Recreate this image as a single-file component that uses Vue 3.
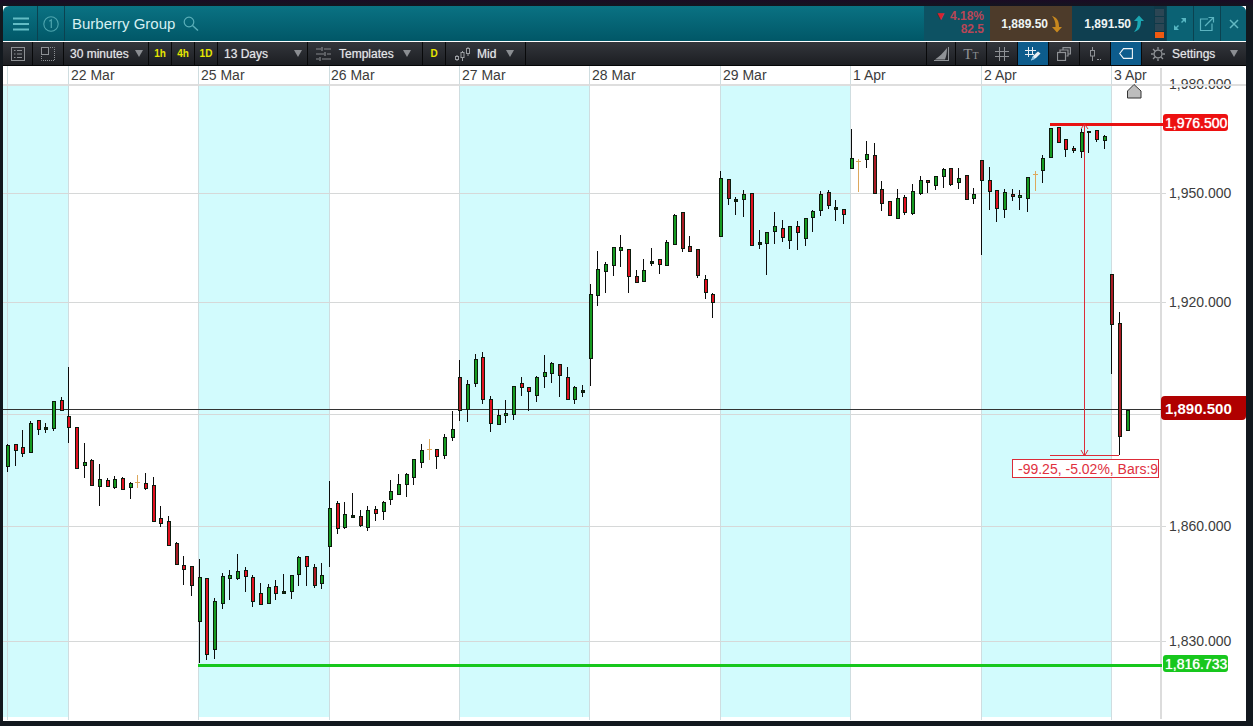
<script setup>
const raw = `g 445 466 444 472;r 444 450 444 466;r 447 453 430 457;g 423 452 421 452;r 420 429 420 435;k 427 429 423 433;g 401 428 401 431;r 400 410 397 410;r 416 427 367 443;r 427 468 427 468;g 462 465 443 478;d 460 485 459 485;g 479 486 464 506;r 480 486 478 487;g 479 487 476 489;r 478 489 477 489;g 483 487 482 499;t 482 483 475 488;r 483 488 473 490;r 485 521 477 521;r 518 523 506 527;r 521 545 516 546;d 543 564 542 564;r 565 569 556 585;d 566 585 566 596;g 577 621 559 663;r 578 654 578 660;g 601 649 598 659;g 576 603 573 609;g 575 578 570 600;g 571 578 554 580;r 570 576 567 592;r 577 601 575 607;r 593 604 583 604;g 587 603 584 603;r 586 593 580 600;k 591 593 574 594;g 575 591 575 599;g 557 574 556 586;r 556 566 556 586;d 567 585 564 588;g 575 583 563 589;g 508 546 481 567;r 503 528 501 534;g 514 527 502 529;k 515 517 493 518;d 516 525 510 527;g 510 527 506 531;r 509 513 506 521;g 502 511 501 520;g 491 499 480 505;g 484 494 474 494;g 474 484 473 497;g 459 477 459 485;g 450 462 444 468;t 449 450 439 460;r 449 456 449 469;g 437 455 434 459;g 429 437 411 441;d 377 410 360 421;g 384 409 380 422;g 359 383 354 387;r 357 399 352 404;r 399 423 396 432;g 415 424 409 424;g 413 415 400 423;g 386 414 386 420;r 383 387 377 396;r 387 391 387 411;g 377 395 376 402;g 372 376 355 388;g 363 373 362 383;d 364 375 364 397;r 377 399 367 399;g 387 399 386 404;k 390 392 385 397;g 294 358 284 386;g 269 295 251 306;g 264 271 262 293;g 247 265 247 276;g 247 250 235 267;r 249 276 249 293;d 276 282 270 283;g 270 281 259 281;k 261 263 248 266;r 259 264 259 274;g 242 265 240 265;g 215 244 214 244;d 212 248 212 252;d 246 251 236 252;d 249 275 249 278;r 279 292 275 299;r 294 302 293 318;g 178 236 171 236;d 179 198 179 205;k 199 201 197 215;g 194 199 190 217;r 193 245 193 245;k 242 244 230 249;g 232 243 232 275;g 226 231 212 244;r 228 237 220 242;g 226 240 226 249;r 226 232 221 250;g 218 238 218 246;g 211 217 210 232;g 194 210 191 216;d 192 205 190 209;k 207 209 200 221;r 209 214 209 224;g 158 168 129 169;t 161 162 159 192;g 154 159 141 168;d 155 193 143 193;d 189 203 181 211;r 201 215 201 216;g 198 218 189 219;r 197 212 195 215;g 191 213 184 215;g 180 193 176 195;d 180 182 180 193;g 176 185 176 190;g 169 176 168 188;d 168 184 168 186;g 178 182 168 189;d 175 199 175 200;g 194 198 188 204;d 160 180 160 255;r 180 191 167 210;r 190 208 190 222;g 192 209 189 218;d 194 196 189 201;g 195 197 190 210;g 177 198 177 212;t 174 175 171 191;g 158 170 155 183;g 128 157 128 157;r 127 142 127 142;r 139 149 139 157;d 148 150 146 153;g 132 151 129 158;k 131 132 131 153;r 130 139 130 142;g 136 140 135 149;d 274 324 274 374;d 323 436 312 455;g 410 430 410 431`
const fills = { g: '#159a20', r: '#e01020', d: '#a81a24', k: '#0c3010' }
const candles = raw.split(';').map((row, i) => {
  const [c, top, bot, wt, wb] = row.split(' ')
  return {
    x: Math.floor(68.7 + 7.67 * (i - 8)) + 0.5,
    type: c,
    top: +top,
    bot: +bot,
    wt: +wt,
    wb: +wb
  }
})
const bands = [[3, 65], [198, 131], [459, 130], [720, 130], [981, 130]]
const days = [7, 68, 198, 329, 459, 589, 720, 850, 981, 1111]
const dates = [['22 Mar', 71], ['25 Mar', 201], ['26 Mar', 331], ['27 Mar', 462], ['28 Mar', 592], ['29 Mar', 723], ['1 Apr', 853], ['2 Apr', 984], ['3 Apr', 1114]]
const prices = [['1,950.000', 193], ['1,920.000', 302], ['1,860.000', 526], ['1,830.000', 641]]
const grid = [193, 302, 414, 526, 641]
</script>

<template>
  <div class="frame">
    <div class="window">
      <header class="top">
        <div class="cell burger">
          <svg width="16" height="14" viewBox="0 0 16 14"><path d="M0 1.500H16M0 7H16M0 12.500H16" stroke="#62bcc4" stroke-width="2" /></svg>
        </div>
        <div class="cell count">
          <svg width="16" height="16" viewBox="0 0 16 16"><circle cx="8" cy="8" r="7.200" fill="none" stroke="#4ea5ae" stroke-width="1.100" /><path d="M6.300 5.200 8.300 3.800V12" fill="none" stroke="#4ea5ae" stroke-width="1.200" /></svg>
        </div>
        <div class="title">Burberry Group</div>
        <svg class="search" width="16" height="15" viewBox="0 0 16 15"><circle cx="6" cy="6" r="4.800" fill="none" stroke="#5aaeb8" stroke-width="1.200" /><path d="M9.500 9.500 15 14.500" stroke="#5aaeb8" stroke-width="1.400" /></svg>
        <div class="spacer"></div>
        <div class="change">
          <div><span class="tri">▼</span> 4.18%</div>
          <div>82.5</div>
        </div>
        <div class="quote sell">
          <span>1,889.50</span>
          <svg width="12" height="18" viewBox="0 0 12 18"><path d="M1 1C5 2 8 5 8 11V12H11L6 17.500 1 12H4.500V11C4.500 7 3.500 4 1 1Z" fill="#c8881e" /></svg>
        </div>
        <div class="quote buy">
          <span>1,891.50</span>
          <svg width="12" height="18" viewBox="0 0 12 18"><path d="M1 17C5 16 8 13 8 7V6H11L6 .5 1 6H4.500V7C4.500 11 3.500 14 1 17Z" fill="#1ba7b2" /></svg>
        </div>
        <div class="meter"><i></i><i></i><i></i><i class="on"></i></div>
        <div class="cell win">
          <svg width="14" height="14" viewBox="0 0 14 14"><path d="M8 1H13V6L11 4 9 6 8 5 10 3ZM1 13V8L3 10 5 8 6 9 4 11 6 13Z" fill="#57b6c2" /></svg>
        </div>
        <div class="cell win">
          <svg width="16" height="16" viewBox="0 0 16 16"><path d="M9 3H1.500V14.500H13V7.500" fill="none" stroke="#5cb4c0" stroke-width="1.200" /><path d="M6 10 14 2M9.500 1.500H14.500V6.500" fill="none" stroke="#5cb4c0" stroke-width="1.200" /></svg>
        </div>
        <div class="cell win last">
          <svg width="10" height="10" viewBox="0 0 10 10"><path d="M1 1 9 9M9 1 1 9" stroke="#63b8c2" stroke-width="1.500" /></svg>
        </div>
      </header>

      <nav class="tools">
        <div class="tool w30">
          <svg width="14" height="14" viewBox="0 0 14 14"><rect x=".5" y=".5" width="13" height="13" fill="none" stroke="#8d9094" /><path d="M3 3.500H4.500M6 3.500H11M3 7H4.500M6 7H11M3 10.500H4.500M6 10.500H11" stroke="#8d9094" /></svg>
        </div>
        <div class="tool w31">
          <svg width="14" height="14" viewBox="0 0 14 14"><rect x=".5" y=".5" width="7" height="7" fill="#24262b" stroke="#8d9094" /><path d="M9 .5H13.500V13.500H.5V9" fill="none" stroke="#8d9094" stroke-dasharray="1 1" /></svg>
        </div>
        <div class="tool drop w85"><span>30 minutes</span><b class="caret"></b></div>
        <div class="tool tf">1h</div>
        <div class="tool tf">4h</div>
        <div class="tool tf">1D</div>
        <div class="tool drop w90"><span>13 Days</span><b class="caret"></b></div>
        <div class="tool drop w115">
          <svg width="15" height="14" viewBox="0 0 15 14"><path d="M0 2H5M8 2H15M0 7H8M11 7H15M0 12H3M6 12H15M6 0V4M9 5V9M4 10V14" stroke="#85888c" stroke-width="1.200" /></svg>
          <span>Templates</span><b class="caret"></b>
        </div>
        <div class="tool tf wide">D</div>
        <div class="tool drop w80">
          <svg class="mid" width="15" height="14" viewBox="0 0 15 14"><path d="M2 8V14M7.500 4V14M13 0V9" stroke="#9a9da1" /><rect x=".5" y="9.500" width="3" height="3" fill="#24262b" stroke="#9a9da1" /><rect x="6" y="5.500" width="3" height="5" fill="#24262b" stroke="#9a9da1" /><rect x="11.500" y="1.500" width="3" height="5" fill="#24262b" stroke="#9a9da1" /></svg>
          <span>Mid</span><b class="caret"></b>
        </div>
        <div class="spacer"></div>
        <div class="tool i30 open-left">
          <svg width="15" height="14" viewBox="0 0 15 14"><path d="M0 13.500H15M14.500 0V13.500" fill="none" stroke="#8f9296" /><path d="M1 12.500C5 10 9 6 13 1 13 6 12 10 11 12.500Z" fill="#8f9296" /></svg>
        </div>
        <div class="tool i31 tt"><span class="big">T</span><span class="small">T</span></div>
        <div class="tool i31">
          <svg width="14" height="14" viewBox="0 0 14 14"><path d="M4.500 0V14M9.500 0V14M0 4.500H14M0 9.500H14" stroke="#8f9296" /></svg>
        </div>
        <div class="tool i31 active">
          <svg width="16" height="14" viewBox="0 0 16 14"><path d="M3.500 0V10M7.500 0V8M0 3.500H11M0 7.500H9" stroke="#e8eef2" /><path d="M6 13.500 8 9 13 4.500 15.500 6.500 11 11Z" fill="#e8eef2" /><path d="M6 13.500 8 9 10 12Z" fill="#8cc8e8" /></svg>
        </div>
        <div class="tool i31">
          <svg width="14" height="14" viewBox="0 0 14 14"><rect x=".5" y="5.500" width="8" height="8" fill="none" stroke="#8f9296" stroke-width="1.200" /><path d="M3 5V3H11V9H9.500M6 2.500V.7H13.400V7H11.500" fill="none" stroke="#8f9296" stroke-width="1.200" /></svg>
        </div>
        <div class="tool i31">
          <svg width="11" height="14" viewBox="0 0 11 14"><path d="M2.500 0V3M2.500 9V14" stroke="#8f9296" /><rect x=".5" y="3.500" width="4" height="5.500" fill="none" stroke="#8f9296" /><path d="M7 12.500H11" stroke="#8f9296" stroke-dasharray="2 1" /></svg>
        </div>
        <div class="tool i31 active">
          <svg width="14" height="11" viewBox="0 0 14 11"><path d="M.7 5.500 4.500 .6H13.400V10.400H4.500Z" fill="none" stroke="#f0f4f6" stroke-width="1.100" /></svg>
        </div>
        <div class="tool settings">
          <svg width="14" height="14" viewBox="0 0 16 16"><circle cx="8" cy="8" r="4.500" fill="none" stroke="#8f9296" stroke-width="1.500" /><path d="M8 0V3M8 13V16M0 8H3M13 8H16M2.300 2.300 4.500 4.500M11.500 11.500 13.700 13.700M13.700 2.300 11.500 4.500M4.500 11.500 2.300 13.700" stroke="#8f9296" stroke-width="1.500" /></svg>
          <span>Settings</span><b class="caret"></b>
        </div>
      </nav>

      <main class="chart">
        <svg class="plot" width="1243" height="655" viewBox="3 66 1243 655">
          <g shape-rendering="crispEdges">
            <rect v-for="b in bands" :key="b[0]" :x="b[0]" y="86" :width="b[1]" height="631" fill="#d2fbfd" />
            <rect v-for="d in days" :key="d" :x="d" y="66" width="1" height="654" fill="#cfdde0" />
            <rect v-for="g in grid" :key="g" x="3" :y="g" width="1163" height="1" fill="#d6d8d8" />
            <rect x="1160" y="68" width="2" height="651" fill="#dcdcdc" />
            <rect x="3" y="409" width="1158" height="1" fill="#333" />
            <g v-for="c in candles" :key="c.x">
              <template v-if="c.type === 't'">
                <rect :x="c.x - 0.5" :y="c.wt" width="1" :height="c.wb - c.wt" fill="#dda85c" />
                <rect :x="c.x - 2.5" :y="c.top" width="5" height="1" fill="#dda85c" />
              </template>
              <template v-else>
                <rect :x="c.x - 0.5" :y="c.wt" width="1" :height="c.wb - c.wt" fill="#0c0c0c" />
                <rect :x="c.x - 1" :y="c.top + 0.5" width="3" :height="c.bot - c.top" :fill="fills[c.type]" stroke="#0d1a0d" />
              </template>
            </g>
            <rect x="198" y="664" width="964" height="3" fill="#17c71d" />
            <rect x="1050" y="123" width="113" height="3" fill="#e81212" />
            <rect x="1084" y="124" width="1" height="332" fill="#dc2c38" />
            <rect x="1050" y="455" width="69" height="1" fill="#dc2c38" />
          </g>
          <path d="M1081 129 1084.500 124 1088 129M1081 450 1084.500 456 1088 450" fill="none" stroke="#dc2c38" />

          <text v-for="d in dates" :key="d[0]" :x="d[1]" y="80" class="axis">{{ d[0] }}</text>
          <text x="1169" y="89" class="axis">1,980.000</text>
          <text v-for="p in prices" :key="p[0]" x="1169" :y="p[1] + 5" class="axis">{{ p[0] }}</text>
          <rect x="3" y="84" width="1243" height="2" fill="#dadada" fill-opacity=".9" shape-rendering="crispEdges" />
          <path d="M1127.500 91 1134 84.500 1141 91V98H1127.500Z" fill="#bdbdbd" stroke="#333" />

          <rect x="1012.500" y="459.500" width="146" height="18" fill="#fff" stroke="#dc2c38" />
          <text x="1018" y="474" class="measure">-99.25, -5.02%, Bars:9</text>

          <rect x="1163" y="114" width="65" height="17" rx="3" fill="#ed1010" />
          <text x="1165" y="128" class="flag">1,976.500</text>
          <path d="M1161 400a4 4 0 0 1 4-4H1246V416a4 4 0 0 1-4 4H1165a4 4 0 0 1-4-4Z" fill="#b00000" />
          <text x="1165" y="414" class="flag big">1,890.500</text>
          <rect x="1163" y="655" width="65" height="17" rx="3" fill="#17c71d" />
          <text x="1165" y="669" class="flag">1,816.733</text>
        </svg>
      </main>
    </div>
  </div>
</template>

<style>
html, body { margin: 0; background: #12181e; overflow: hidden; }
</style>

<style scoped>
.frame {
  width: 1253px;
  height: 726px;
  box-sizing: border-box;
  padding: 6px 7px 5px 3px;
  background: linear-gradient(#1a0c24 0, #12181e 8px);
  font-family: "Liberation Sans", Arial, sans-serif;
}
.window {
  height: 100%;
  display: flex;
  flex-direction: column;
  background: #fff;
}
.top {
  flex: 0 0 35px;
  display: flex;
  align-items: stretch;
  background: linear-gradient(#0a7283, #015767);
  border-radius: 6px 6px 0 0;
  overflow: hidden;
}
.cell {
  display: flex;
  align-items: center;
  justify-content: center;
  box-sizing: border-box;
  border-right: 1px solid #0b4250;
}
.burger { width: 35px; padding-left: 2px; }
.count { width: 27px; }
.title {
  margin-left: 7px;
  align-self: center;
  color: #d6f0f2;
  font-size: 15px;
}
.search { align-self: center; margin-left: 8px; }
.spacer { flex: 1; }
.change {
  width: 66px;
  box-sizing: border-box;
  padding: 4px 6px 0 0;
  background: #0d5263;
  color: #b84656;
  font-size: 12px;
  font-weight: bold;
  line-height: 13px;
  text-align: right;
}
.tri { color: #d8222e; font-size: 12px; }
.quote {
  width: 82px;
  display: flex;
  align-items: center;
  justify-content: flex-end;
  gap: 2px;
  padding-right: 9px;
  box-sizing: border-box;
  color: #eef4f4;
  font-size: 12px;
  font-weight: bold;
}
.sell { background: #4d3b2a; padding-right: 9px; }
.sell span { margin-right: 1px; }
.buy { background: #0f3f50; }
.meter {
  width: 12px;
  box-sizing: border-box;
  padding: 3px 2px 3px 1px;
  display: flex;
  flex-direction: column;
  gap: 1px;
  background: #0f3a49;
}
.meter i { flex: 1; background: #2c4654; }
.meter .on { background: #f05a10; }
.win { width: 27px; background: #0b6274; border-left: 1px solid #0b4250; border-right: 0; }
.last { width: 26px; }

.tools {
  flex: 0 0 24px;
  display: flex;
  align-items: stretch;
  margin-top: 1px;
  background: linear-gradient(#33363c, #1c1e22);
  border-bottom: 1px solid #050607;
  box-sizing: border-box;
  color: #e4e6e8;
  font-size: 12px;
  text-shadow: 0 0 1px rgba(228, 230, 232, .6);
}
.tool {
  display: flex;
  align-items: center;
  justify-content: center;
  box-sizing: border-box;
  border-right: 1px solid #08090a;
}
.w30 { width: 30px; }
.w31 { width: 31px; }
.drop { gap: 6px; padding: 0 3px 0 6px; justify-content: flex-start; }
.drop .caret { margin-left: auto; margin-right: 2px; }
.w85 { width: 85px; }
.w90 { width: 90px; padding-left: 6px; }
.w115 { width: 115px; padding-left: 8px; gap: 8px; padding-right: 9px; }
.w80 { width: 80px; padding-left: 9px; gap: 7px; padding-right: 9px; }
.tf {
  width: 23px;
  color: #e6e600;
  font-size: 10px;
  font-weight: bold;
  text-shadow: none;
}
.caret {
  width: 0;
  height: 0;
  border-left: 4px solid transparent;
  border-right: 4px solid transparent;
  border-top: 7px solid #8b8e92;
}
.open-left { border-left: 1px solid #08090a; }
.i30 { width: 30px; }
.i31 { width: 31px; }
.tt {
  font-family: "Liberation Serif", serif;
  color: #8f9296;
  text-shadow: none;
  align-items: baseline;
  padding-top: 4px;
}
.tt .big { font-size: 15px; }
.tt .small { font-size: 10px; }
.active { background: #0d5c8c; }
.settings {
  width: 104px;
  gap: 7px;
  justify-content: flex-start;
  padding-left: 9px;
  border-right: 0;
}
.settings .caret { margin-left: 8px; }

.chart { flex: 1; position: relative; overflow: hidden; }
.plot { display: block; }
.axis {
  font-size: 14px;
  fill: #3c3c3c;
}
.measure {
  font-size: 14px;
  fill: #e0303e;
}
.flag {
  font-size: 14px;
  fill: #fff;
  text-shadow: 0 0 1px #fff;
}
.flag.big { font-size: 15px; font-weight: bold; text-shadow: none; }
</style>
